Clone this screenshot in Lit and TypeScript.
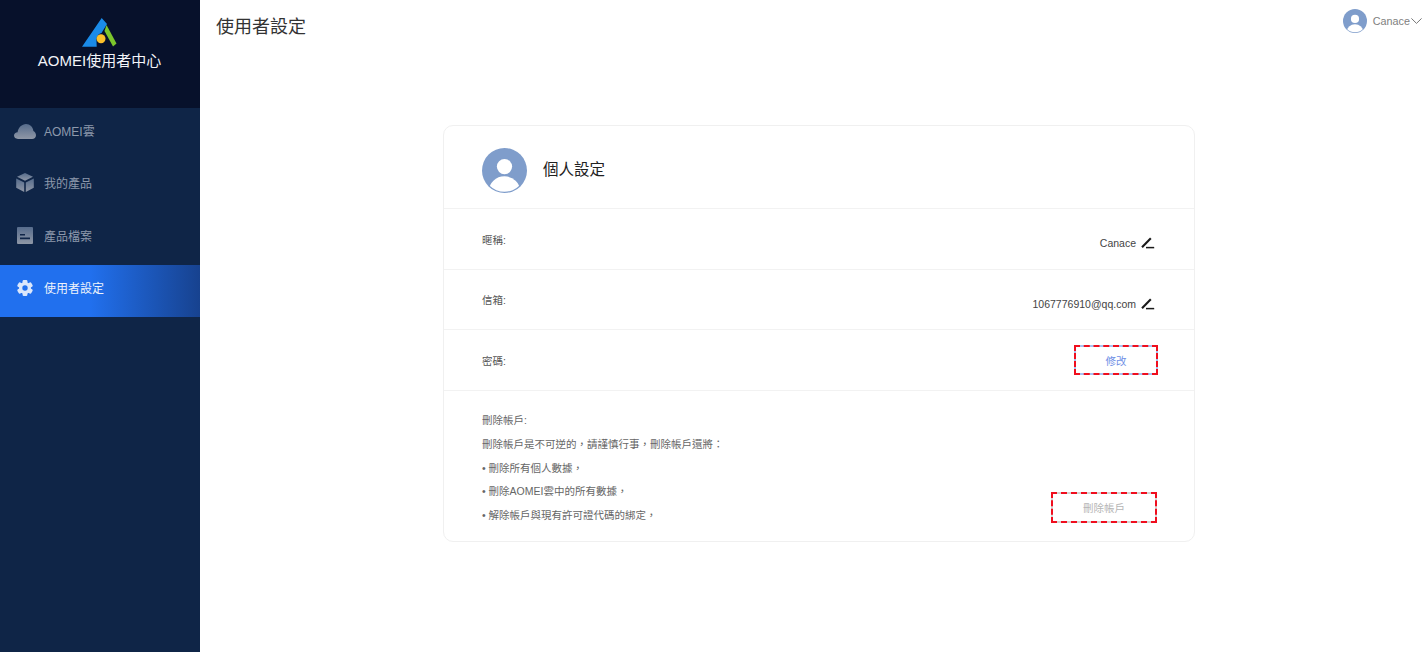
import { LitElement, html, css, svg } from "lit";
import { customElement } from "lit/decorators.js";

const avatar = (size: number) => html`<svg width=${size} height=${size} viewBox="0 0 46 46" style="display:block">
  <defs><clipPath id="c${size}"><circle cx="23" cy="23" r="21.8"/></clipPath></defs>
  <circle cx="23" cy="23" r="23" fill="#7f9dcb"/>
  <circle cx="23" cy="19" r="7.8" fill="#fff"/>
  <ellipse cx="23" cy="44" rx="16" ry="15" fill="#fff" clip-path="url(#c${size})"/>
</svg>`;

const pencil = html`<svg class="pen" width="14" height="12" viewBox="0 0 14 12">
  <path d="M1 10.2 L9.8 1.2" stroke="#1a1a1a" stroke-width="2.1" fill="none"/>
  <path d="M5 10.6 H13.2" stroke="#1a1a1a" stroke-width="1.5" fill="none"/>
</svg>`;

const teeth = [0, 60, 120, 180, 240, 300];

const nav = [
  {
    t: "AOMEI雲",
    i: svg`<path d="M4 19 C1.5 19 0 17.4 0 15.6 C0 13.6 1.6 12.2 3.6 12.2 C4.2 7.6 8 4 12 4 C16 4 19 7 19.4 11 C21 11.8 22 13.4 22 15.2 C22 17.4 20.4 19 18 19 Z" fill="url(#ng)"/>`,
  },
  {
    t: "我的產品",
    i: svg`<path d="M11 1 L19 4.8 L11 8.8 L3 4.8 Z" fill="url(#ng)"/><path d="M2.2 6.6 L10.2 10.4 V20 L2.2 15.8 Z M19.8 6.6 L11.8 10.4 V20 L19.8 15.8 Z" fill="url(#ng)"/>`,
  },
  {
    t: "產品檔案",
    i: svg`<path fill-rule="evenodd" d="M4 3 H18 Q19 3 19 4 V19 Q19 20 18 20 H4 Q3 20 3 19 V4 Q3 3 4 3 Z M6 10 V11.6 H11 V10 Z M6 13.6 V15.2 H16 V13.6 Z" fill="url(#ng)"/>`,
  },
  {
    t: "使用者設定",
    on: true,
    i: svg`<g fill="#dbe7fb"><circle cx="11" cy="11" r="6"/>${teeth.map(
      (a) => svg`<rect x="8.6" y="3" width="4.8" height="4" rx="1.2" transform="rotate(${a} 11 11)"/>`
    )}</g><circle cx="11" cy="11" r="2.7" fill="#2170ee"/>`,
  },
];

@customElement("app-root")
export class AppRoot extends LitElement {
  static styles = css`
    :host {
      display: flex;
      width: 100%;
      height: 652px;
      overflow: hidden;
      background: #fff;
      font-family: "Liberation Sans", "Noto Sans CJK TC", sans-serif;
      color: #333;
    }
    .side {
      width: 200px;
      flex: none;
      background: #0f2547;
      display: flex;
      flex-direction: column;
    }
    .brand {
      height: 108px;
      flex: none;
      background: #07112b;
      display: flex;
      flex-direction: column;
      align-items: center;
      padding-top: 18px;
      box-sizing: border-box;
      color: #f2f4f8;
      line-height: 20px;
    }
    .brand svg { display: block; margin-bottom: 4px; margin-right: 1px; }
    .brand .name { font-size: 15px; margin-right: 1px; }
    .item {
      height: 52.3px;
      flex: none;
      box-sizing: border-box;
      display: flex;
      align-items: center;
      padding: 0 0 7px 14px;
      font-size: 12px;
      color: #8d99ac;
    }
    .item .ic { width: 22px; height: 22px; margin-right: 8px; flex: none; display: block; }
    .item.on {
      color: #eef3fb;
      background: linear-gradient(90deg, #2170ee 0%, #2170ee 45%, #17428f 100%);
    }
    .defs { display: block; flex: none; }
    .main { flex: 1; min-width: 0; display: flex; flex-direction: column; }
    .top {
      height: 125px;
      flex: none;
      display: flex;
      justify-content: space-between;
      align-items: flex-start;
      padding: 9px 2px 0 16px;
      box-sizing: border-box;
    }
    .title { font-size: 18px; line-height: 36px; color: #333; margin: 0; font-weight: 400; }
    .user { display: flex; align-items: center; font-size: 10.8px; color: #808080; }
    .user .av { margin-right: 6px; }
    .user .chev { margin-left: 1px; display: block; }
    .card {
      width: 752px;
      height: 417px;
      margin-left: 243px;
      box-sizing: border-box;
      border: 1px solid #f0f0f0;
      border-radius: 10px;
      display: flex;
      flex-direction: column;
    }
    .head {
      height: 83px;
      flex: none;
      display: flex;
      align-items: center;
      padding: 0 38px;
      box-sizing: border-box;
      border-bottom: 1px solid #f2f2f2;
      font-size: 15.5px;
      color: #222;
    }
    .head .av { margin: 6px 16px 0 0; }
    .head .label { margin-top: 2px; }
    .row {
      height: 60.7px;
      flex: none;
      display: flex;
      align-items: center;
      justify-content: space-between;
      padding: 0 37px 0 38px;
      box-sizing: border-box;
      border-bottom: 1px solid #f2f2f2;
      font-size: 10.5px;
      color: #555;
    }
    .row.first .key { padding-top: 2px; }
    .val { display: flex; align-items: center; font-size: 10.5px; color: #444; padding-top: 8px; }
    .pen { margin: 0 2px 0 5px; display: block; }
    .btn {
      width: 84px;
      height: 30px;
      box-sizing: border-box;
      border: 2px dashed #f00e1e;
      background: linear-gradient(#fff, #fff) padding-box, #a9c2f2 border-box;
      display: flex;
      align-items: center;
      justify-content: center;
      font-size: 10.5px;
      color: #6f8fe6;
      margin-right: -1px;
    }
    .del {
      flex: 1;
      display: flex;
      justify-content: space-between;
      padding: 18px 37px 0 38px;
      font-size: 10.5px;
      color: #666;
      line-height: 23.8px;
    }
    .del p { margin: 0; }
    .btn.gray {
      width: 106px;
      height: 31px;
      color: #b5b5b5;
      margin: 83px 0 0 0;
      padding-top: 3px;
      background: linear-gradient(#fff, #fff) padding-box, #d5d5d5 border-box;
    }
  `;

  render() {
    return html`
      <aside class="side" lang="zh-Hant">
        <svg class="defs" width="0" height="0">
          <defs>
            <linearGradient id="ng" x1="0" y1="0" x2="0" y2="1">
              <stop offset="0" stop-color="#566c8c" />
              <stop offset="1" stop-color="#8f97a6" />
            </linearGradient>
          </defs>
        </svg>
        <div class="brand">
          <svg width="36" height="29" viewBox="0 0 36 29">
            <path d="M19.7 0 L25 6 L19.5 15 C16 16 14 19 14.5 23 L14.7 28.7 H0 Z" fill="#1a8be8"/>
            <path d="M24.5 7 L34.5 25.5 L31 28.5 L22.5 13 Z" fill="#7cc62c"/>
            <circle cx="19" cy="20.7" r="4.5" fill="#fcc12b"/>
          </svg>
          <div class="name">AOMEI使用者中心</div>
        </div>
        ${nav.map(
          (n) => html`<div class="item ${n.on ? "on" : ""}">
            <svg class="ic" viewBox="0 0 22 22">${n.i}</svg>${n.t}
          </div>`
        )}
      </aside>
      <main class="main" lang="zh-Hant">
        <header class="top">
          <h1 class="title">使用者設定</h1>
          <div class="user">
            <span class="av">${avatar(24)}</span>Canace
            <svg class="chev" width="11" height="6" viewBox="0 0 11 6"><path d="M.4 .4 L5.5 5.4 L10.6 .4" fill="none" stroke="#777" stroke-width="1"/></svg>
          </div>
        </header>
        <section class="card">
          <div class="head"><span class="av">${avatar(45)}</span><span class="label">個人設定</span></div>
          <div class="row first"><span class="key">暱稱:</span><span class="val">Canace${pencil}</span></div>
          <div class="row"><span class="key">信箱:</span><span class="val">1067776910@qq.com${pencil}</span></div>
          <div class="row"><span class="key">密碼:</span><span class="btn">修改</span></div>
          <div class="del">
            <div>
              <p>刪除帳戶:</p>
              <p>刪除帳戶是不可逆的，請謹慎行事，刪除帳戶還將：</p>
              <p>• 刪除所有個人數據，</p>
              <p>• 刪除AOMEI雲中的所有數據，</p>
              <p>• 解除帳戶與現有許可證代碼的綁定，</p>
            </div>
            <span class="btn gray">刪除帳戶</span>
          </div>
        </section>
      </main>
    `;
  }
}
